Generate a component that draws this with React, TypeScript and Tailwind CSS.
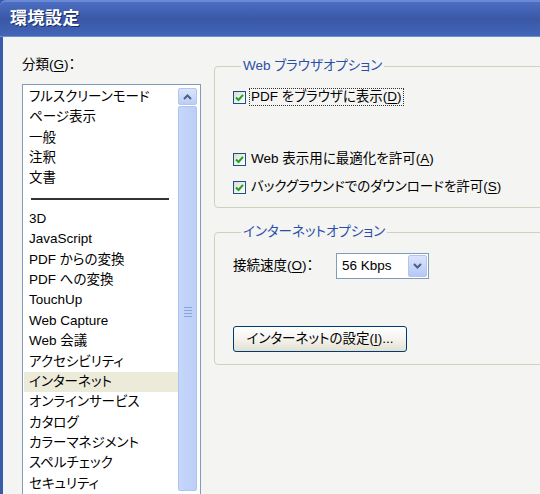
import React from 'react'

const FONT = "[font-family:'Liberation_Sans','Noto_Sans_CJK_JP',sans-serif] [font-feature-settings:'palt']"

const categories: (string | null)[] = [
  'フルスクリーンモード',
  'ページ表示',
  '一般',
  '注釈',
  '文書',
  null,
  '3D',
  'JavaScript',
  'PDF からの変換',
  'PDF への変換',
  'TouchUp',
  'Web Capture',
  'Web 会議',
  'アクセシビリティ',
  'インターネット',
  'オンラインサービス',
  'カタログ',
  'カラーマネジメント',
  'スペルチェック',
  'セキュリティ',
]

function Key({ k }: { k: string }) {
  return (
    <>
      (<span className="underline underline-offset-2">{k}</span>)
    </>
  )
}

function CheckBox() {
  return (
    <span className="flex h-[13px] w-[13px] shrink-0 items-center justify-center border border-[#1c5180] bg-gradient-to-br from-[#dcdcd6] to-white">
      <svg width="9" height="9" viewBox="0 0 9 9">
        <path d="M1 4.5 L3.5 7 L8 1.8" fill="none" stroke="#21a121" strokeWidth="2" />
      </svg>
    </span>
  )
}

function CheckRow({ children, focus }: { children: React.ReactNode; focus?: boolean }) {
  return (
    <div className="flex h-[18px] items-center gap-[4px]">
      <CheckBox />
      <span className={`px-[1px] leading-[16px] ${focus ? 'outline outline-1 outline-dotted outline-[#333]' : ''}`}>
        {children}
      </span>
    </div>
  )
}

function Group({ title, children, className }: { title: string; children: React.ReactNode; className?: string }) {
  return (
    <fieldset className={`w-[340px] rounded-[4px] border border-[#d0d0bf] pl-[18px] ${className ?? ''}`}>
      <legend className="ml-[8px] px-[2px] leading-[16px] text-[#2a4fa8]">{title}</legend>
      {children}
    </fieldset>
  )
}

export default function App(): React.JSX.Element {
  return (
    <div className={`flex h-[494px] w-[540px] flex-col overflow-hidden bg-[#3a5ca8] text-[13.5px] text-black ${FONT}`}>
      {/* タイトルバー */}
      <div className="flex h-[36px] shrink-0 items-center rounded-tl-[6px] border-t-2 border-[#6a8ad8] bg-gradient-to-b from-[#4c6dc2] via-[#3a58a6] to-[#4265b8] pl-[10px]">
        <span className="text-[17px] font-bold tracking-[0.5px] text-white [text-shadow:1px_1px_0_#1a2c60]">環境設定</span>
      </div>

      <div className="flex flex-1 border-t border-[#6d8fd8] pl-[3px]">
        <div className="flex flex-1 bg-[#f4f4f2]">
          {/* 左列: 分類 */}
          <div className="flex w-[198px] shrink-0 flex-col pl-[19px] pt-[20px]">
            <div className="h-[16px] leading-[16px]">
              分類<Key k="G" />：
            </div>
            <div className="mt-[11px] flex flex-1 border border-[#7f9db9] bg-white">
              <div className="flex-1 pl-[1px] pt-[2px]">
                {categories.map((c, i) =>
                  c === null ? (
                    <div key={i} className="flex h-[20.35px] items-center pl-[7px] pr-[8px]">
                      <div className="h-[2px] w-[138px] bg-[#333]" />
                    </div>
                  ) : (
                    <div
                      key={i}
                      className={`flex h-[20.35px] items-center pl-[5px] ${c === 'インターネット' ? 'bg-[#ecead9]' : ''}`}
                    >
                      {c}
                    </div>
                  ),
                )}
              </div>
              {/* スクロールバー */}
              <div className="my-[3px] mr-[3px] flex w-[19px] flex-col gap-[1px]">
                <div className="flex h-[17px] items-center justify-center rounded-[2px] border border-[#b4c6ee] bg-gradient-to-b from-[#dae4fc] to-[#bccdf6]">
                  <svg width="9" height="6" viewBox="0 0 9 6">
                    <path d="M1 5 L4.5 1.5 L8 5" fill="none" stroke="#4d6185" strokeWidth="2" />
                  </svg>
                </div>
                <div className="flex flex-1 flex-col items-center rounded-[2px] border border-[#b0c4ee] bg-gradient-to-r from-[#c6d6fb] to-[#bccef8] pt-[200px]">
                  {[0, 1, 2, 3].map((n) => (
                    <div key={n} className="mb-[2px] h-[1px] w-[8px] bg-[#8aa4e0]" />
                  ))}
                </div>
              </div>
            </div>
          </div>

          {/* 右列: オプション */}
          <div className="ml-[13px] flex flex-col pt-[21px]">
            <Group title="Web ブラウザオプション" className="pb-[11px]">
              <div className="mt-[14px]">
                <CheckRow focus>
                  PDF をブラウザに表示<Key k="D" />
                </CheckRow>
              </div>
              <div className="mt-[44px]">
                <CheckRow>
                  Web 表示用に最適化を許可<Key k="A" />
                </CheckRow>
              </div>
              <div className="mt-[10px]">
                <CheckRow>
                  バックグラウンドでのダウンロードを許可<Key k="S" />
                </CheckRow>
              </div>
            </Group>

            <Group title="インターネットオプション" className="mt-[16px] pb-[12px]">
              <div className="mt-[13px] flex items-center">
                <span className="w-[103px]">
                  接続速度<Key k="O" />：
                </span>
                <div className="flex h-[26px] w-[93px] items-center border border-[#7f9db9] bg-white pl-[5px] pr-[1px]">
                  <span className="flex-1">56 Kbps</span>
                  <div className="flex h-[22px] w-[19px] items-center justify-center rounded-[2px] border border-[#b4c6ee] bg-gradient-to-b from-[#dae4fc] to-[#b6c8f4]">
                    <svg width="9" height="6" viewBox="0 0 9 6">
                      <path d="M1 1 L4.5 4.5 L8 1" fill="none" stroke="#4d6185" strokeWidth="2" />
                    </svg>
                  </div>
                </div>
              </div>
              <button className="mt-[47px] flex h-[26px] w-[174px] items-center justify-center rounded-[3px] border border-[#003c74] bg-gradient-to-b from-white via-[#f4f3ee] to-[#e3e0d2] leading-none">
                インターネットの設定<Key k="I" />...
              </button>
            </Group>
          </div>
        </div>
      </div>
    </div>
  )
}
